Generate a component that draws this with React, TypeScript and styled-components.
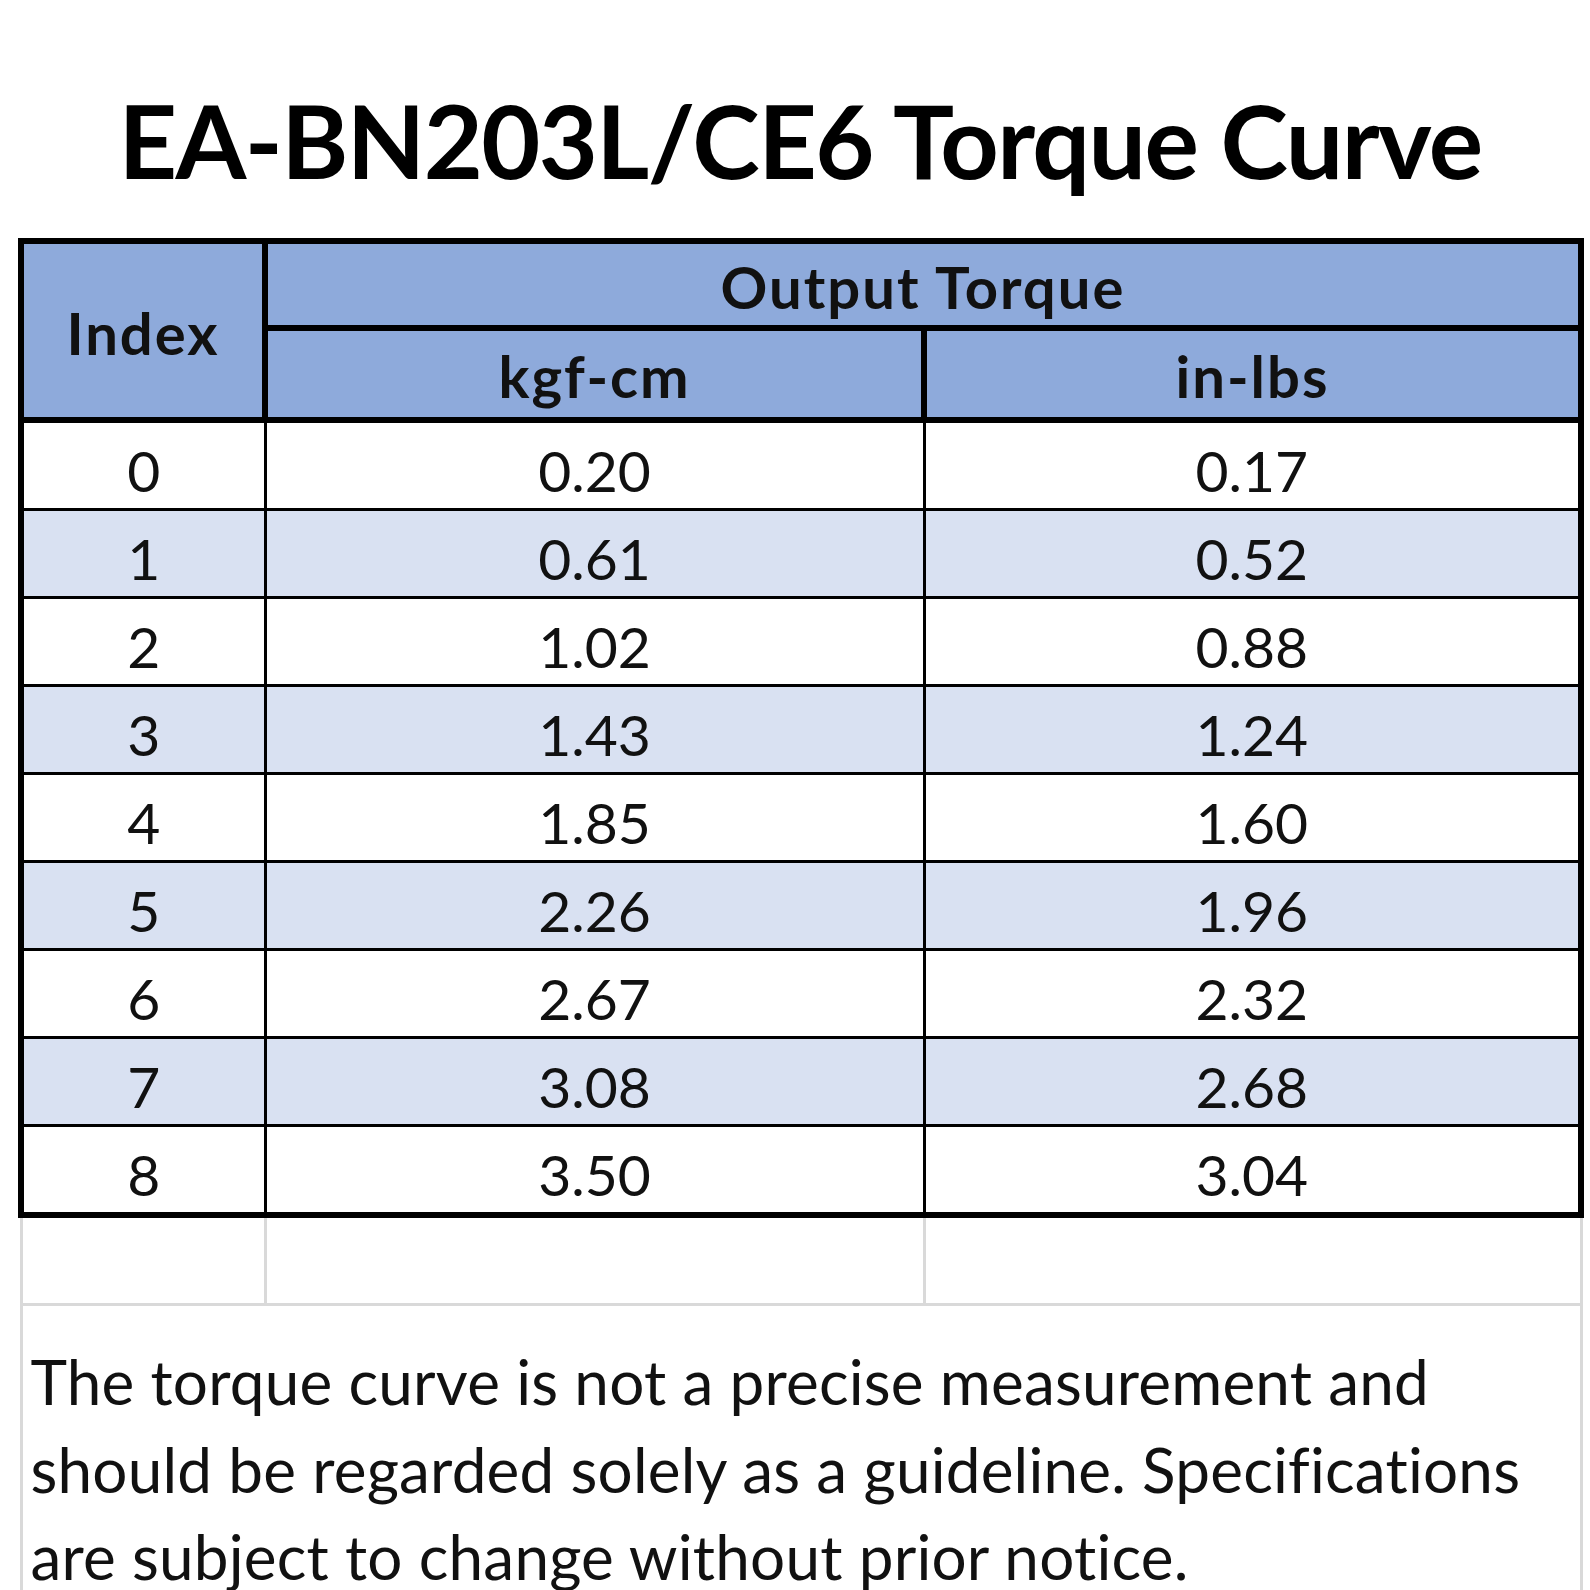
import React from 'react';
import styled, { createGlobalStyle } from 'styled-components';

const rows: [string, string, string][] = [
  ['0', '0.20', '0.17'],
  ['1', '0.61', '0.52'],
  ['2', '1.02', '0.88'],
  ['3', '1.43', '1.24'],
  ['4', '1.85', '1.60'],
  ['5', '2.26', '1.96'],
  ['6', '2.67', '2.32'],
  ['7', '3.08', '2.68'],
  ['8', '3.50', '3.04'],
];

const GlobalStyle = createGlobalStyle`
  html, body {
    margin: 0;
    padding: 0;
    background: #ffffff;
  }
  body {
    width: 1590px;
    height: 1590px;
    overflow: hidden;
    font-family: Lato, "Open Sans", sans-serif;
    color: #111111;
  }
`;

const Page = styled.main`
  display: flex;
  flex-direction: column;
  align-items: stretch;
  padding: 89px 8px 0 18px;
`;

const Title = styled.h1`
  margin: 0 0 47px;
  font-size: 102px;
  line-height: 1;
  font-weight: 700;
  letter-spacing: -1.6px;
  text-align: center;
  color: #000000;
`;

const Sheet = styled.table`
  width: 1560px;
  table-layout: fixed;
  border-collapse: collapse;
  font-size: 57px;
`;

const HeadCell = styled.th<{ $height: number }>`
  height: ${(p) => p.$height}px;
  padding: 4px 0 0;
  background: #8eaadb;
  border: 6px solid #000000;
  font-size: 58px;
  font-weight: 700;
  letter-spacing: 2px;
  text-align: center;
  vertical-align: middle;
  line-height: 1;
`;

const Row = styled.tr<{ $band: boolean }>`
  background: ${(p) => (p.$band ? '#d9e1f2' : '#ffffff')};
`;

const Cell = styled.td<{ $last: boolean }>`
  height: 75px;
  padding: 10px 0 0;
  text-align: center;
  vertical-align: middle;
  line-height: 1;
  border-top: 3px solid #000000;
  border-left: 3px solid #000000;
  border-right: 3px solid #000000;
  border-bottom: ${(p) => (p.$last ? '6px' : '3px')} solid #000000;

  &:first-child {
    border-left-width: 6px;
  }
  &:last-child {
    border-right-width: 6px;
  }
`;

const BlankCell = styled.td`
  height: 85px;
  padding: 0;
  border: 3px solid #d9d9d9;
`;

const NoteCell = styled.td`
  padding: 32px 0 0 8px;
  border-left: 3px solid #d9d9d9;
  border-right: 3px solid #d9d9d9;
  border-top: 3px solid #d9d9d9;
  vertical-align: top;
`;

const Note = styled.p`
  margin: 0;
  font-size: 62px;
  line-height: 87.6px;
  font-weight: 400;
  letter-spacing: 0.2px;
  color: #111111;
  white-space: nowrap;
`;

const App: React.FC = () => {
  return (
    <>
      <GlobalStyle />
      <Page>
        <Title>EA-BN203L/CE6 Torque Curve</Title>

        <Sheet>
          <colgroup>
            <col style={{ width: 244 }} />
            <col style={{ width: 659 }} />
            <col style={{ width: 657 }} />
          </colgroup>
          <thead>
            <tr>
              <HeadCell rowSpan={2} $height={161}>
                Index
              </HeadCell>
              <HeadCell colSpan={2} $height={77}>
                Output Torque
              </HeadCell>
            </tr>
            <tr>
              <HeadCell $height={82}>kgf-cm</HeadCell>
              <HeadCell $height={82}>in-lbs</HeadCell>
            </tr>
          </thead>
          <tbody>
            {rows.map(([index, kgf, inLbs], i) => (
              <Row key={index} $band={i % 2 === 1}>
                <Cell $last={i === rows.length - 1}>{index}</Cell>
                <Cell $last={i === rows.length - 1}>{kgf}</Cell>
                <Cell $last={i === rows.length - 1}>{inLbs}</Cell>
              </Row>
            ))}
            <tr>
              <BlankCell />
              <BlankCell />
              <BlankCell />
            </tr>
            <tr>
              <NoteCell colSpan={3}>
                <Note>
                  The torque curve is not a precise measurement and
                  <br />
                  should be regarded solely as a guideline. Specifications
                  <br />
                  are subject to change without prior notice.
                </Note>
              </NoteCell>
            </tr>
          </tbody>
        </Sheet>
      </Page>
    </>
  );
};

export default App;
